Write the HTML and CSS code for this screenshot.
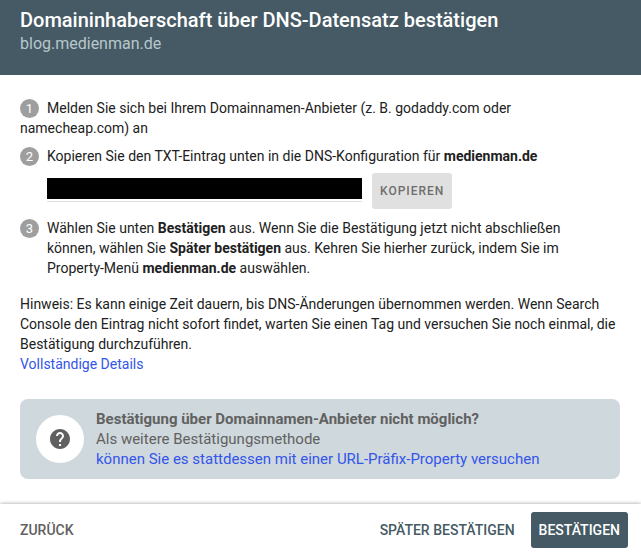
FILE: index.html
```html
<!DOCTYPE html>
<html lang="de">
<head>
<meta charset="utf-8">
<meta name="viewport" content="width=device-width, initial-scale=1">
<title>Domaininhaberschaft bestätigen</title>
<link rel="stylesheet" href="styles.css">
</head>
<body>
<header class="header">
  <h1 class="title">Domaininhaberschaft über DNS-Datensatz bestätigen</h1>
  <p class="subtitle">blog.medienman.de</p>
</header>
<main class="content">
  <section class="steps">
    <div class="step-inline"><span class="badge">1</span>Melden Sie sich bei Ihrem Domainnamen-Anbieter (z.&nbsp;B. godaddy.com oder namecheap.com) an</div>
    <div class="step">
      <span class="badge">2</span>
      <div class="step-body">
        <label for="record">Kopieren Sie den TXT-Eintrag unten in die DNS-Konfiguration für <b>medienman.de</b></label>
        <div class="record">
          <span class="field"><input class="record-input" id="record" type="text" readonly></span>
          <button class="button copy" type="button">KOPIEREN</button>
        </div>
      </div>
    </div>
    <div class="step">
      <span class="badge">3</span>
      <div class="step-body narrow">Wählen Sie unten <b>Bestätigen</b> aus. Wenn Sie die Bestätigung jetzt nicht abschließen können, wählen Sie <b>Später bestätigen</b> aus. Kehren Sie hierher zurück, indem Sie im Property-Menü <b>medienman.de</b> auswählen.</div>
    </div>
  </section>
  <p class="note">Hinweis: Es kann einige Zeit dauern, bis DNS-Änderungen übernommen werden. Wenn Search Console den Eintrag nicht sofort findet, warten Sie einen Tag und versuchen Sie noch einmal, die Bestätigung durchzuführen.<br><a href="#">Vollständige Details</a></p>
  <aside class="callout">
    <span class="callout-icon">
      <svg width="24" height="24" viewBox="0 0 24 24" fill="currentColor" aria-hidden="true"><path d="M12 2C6.48 2 2 6.48 2 12s4.480 10 10 10 10-4.480 10-10S17.520 2 12 2zm1 17h-2v-2h2v2zm2.070-7.750l-.9.920C13.450 12.900 13 13.500 13 15h-2v-.5c0-1.100.45-2.100 1.170-2.830l1.240-1.260c.37-.36.59-.86.59-1.410 0-1.100-.9-2-2-2s-2 .9-2 2H8c0-2.210 1.790-4 4-4s4 1.790 4 4c0 .88-.36 1.680-.93 2.250z"/></svg>
    </span>
    <div><b>Bestätigung über Domainnamen-Anbieter nicht möglich?</b><br>Als weitere Bestätigungsmethode<br><a href="#">können Sie es stattdessen mit einer URL-Präfix-Property versuchen</a></div>
  </aside>
</main>
<footer class="footer">
  <button class="button back" type="button">ZURÜCK</button>
  <button class="button later" type="button">SPÄTER BESTÄTIGEN</button>
  <button class="button confirm" type="button">BESTÄTIGEN</button>
</footer>
</body>
</html>
```

FILE: styles.css
```css
* {
  box-sizing: border-box;
}

body {
  margin: 0;
  background: #fff;
  color: #212121;
  font: 14px/20px Roboto, sans-serif;
}

a {
  color: #3355ea;
  text-decoration: none;
}

.header {
  padding: 8px 20px 20px;
  background: #455a64;
}

.title {
  margin: 0;
  color: #fff;
  font-size: 20px;
  font-weight: 500;
  line-height: 24px;
}

.subtitle {
  margin: 0;
  color: #b8c7cc;
  font-size: 16px;
  line-height: 23px;
}

.content {
  padding: 23px 21px 25px 20px;
}

.steps {
  display: flex;
  flex-direction: column;
  gap: 8px;
}

.step-inline {
  max-width: 560px;
}

.step {
  display: flex;
  gap: 8px;
}

.badge {
  flex: none;
  display: inline-block;
  width: 19px;
  height: 19px;
  margin-top: 1px;
  border-radius: 50%;
  background: #9e9e9e;
  color: #fff;
  font-size: 13px;
  line-height: 19px;
  text-align: center;
}

.step-inline .badge {
  margin-right: 8px;
  vertical-align: top;
}

.step-body {
  flex: 1;
}

.narrow {
  max-width: 520px;
}

.record {
  display: flex;
  align-items: center;
  gap: 10px;
  margin: 7px 0 1px;
}

.field {
  flex: 0 1 315px;
  display: flex;
  margin-top: -2px;
  padding-bottom: 2px;
  border-bottom: 1px solid #e0e0e0;
}

.record-input {
  width: 100%;
  height: 21px;
  padding: 0;
  border: 0;
  background: #000;
  color: #000;
}

.button {
  height: 36px;
  padding: 0 8px;
  border: 0;
  border-radius: 3px;
  background: none;
  font: 500 14px/20px Roboto, sans-serif;
  cursor: pointer;
}

.copy {
  background: #e0e0e0;
  color: #6e6e6e;
  font-size: 12px;
  letter-spacing: 1px;
}

.note {
  margin: 16px 0 25px;
}

.callout {
  display: flex;
  align-items: center;
  gap: 12px;
  padding: 10px 16px;
  border-radius: 8px;
  background: #cfd8dc;
  color: #616161;
  font-size: 15px;
}

.callout-icon {
  flex: none;
  display: grid;
  place-items: center;
  width: 48px;
  height: 48px;
  border-radius: 50%;
  background: #fff;
}

.footer {
  display: flex;
  align-items: center;
  gap: 8px;
  padding: 8px 13px 11px 12px;
  box-shadow: 0 0 4px rgba(0, 0, 0, 0.4);
}

.back {
  margin-right: auto;
  color: #616161;
}

.later {
  color: #455a64;
}

.confirm {
  background: #455a64;
  color: #fff;
}
```
